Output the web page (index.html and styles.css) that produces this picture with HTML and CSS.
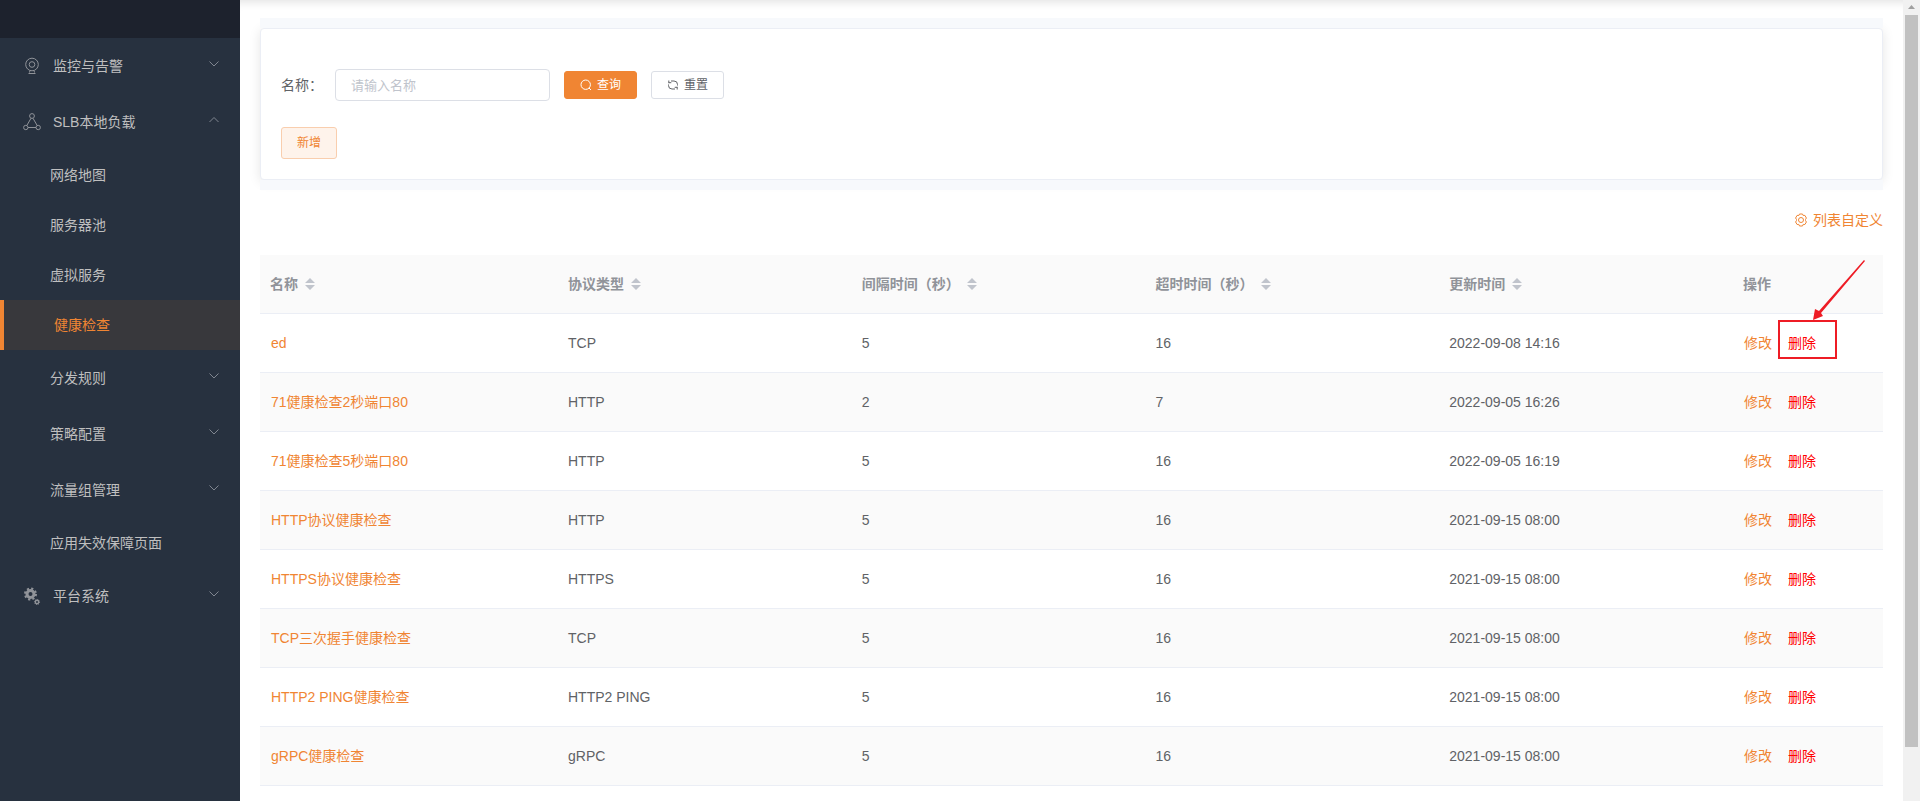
FILE: index.html
```
<!DOCTYPE html>
<html lang="zh-CN">
<head>
    <meta charset="utf-8">
    <meta name="viewport" content="width=device-width, initial-scale=1">
    <title>健康检查</title>
    <link rel="stylesheet" href="styles.css">
</head>
<body>
    <!-- shared icons -->
    <svg class="sprite" aria-hidden="true">
        <symbol id="down" viewBox="0 0 12 12"><path d="M1.500 3.500 6 8l4.500-4.500"/></symbol>
        <symbol id="up" viewBox="0 0 12 12"><path d="M1.500 8 6 3.500 10.500 8"/></symbol>
        <symbol id="sort" viewBox="0 0 10 12"><path d="M5 0l5 5H0zM5 12l5-5H0z"/></symbol>
    </svg>

    <aside class="sidebar">
        <div class="logo"></div>
        <nav>
            <a href="#" class="item">
                <svg class="icon" viewBox="0 0 18 18"><circle cx="9" cy="7.500" r="6.300"/><circle cx="9" cy="7.500" r="2.800"/><path d="M7 13.500l-.5 2M11 13.500l.5 2M5.500 16.500h7"/></svg>
                <span>监控与告警</span>
                <svg class="arrow"><use href="#down"/></svg>
            </a>
            <a href="#" class="item">
                <svg class="icon" viewBox="0 0 18 18"><circle cx="9" cy="3" r="2.400"/><circle cx="2.800" cy="14.500" r="2.200"/><circle cx="15.200" cy="14.500" r="2.200"/><path d="M8 5.300 3.800 12.500M10 5.300l4.200 7.200M5 14.500h8"/></svg>
                <span>SLB本地负载</span>
                <svg class="arrow"><use href="#up"/></svg>
            </a>
            <div class="submenu">
                <a href="#" class="sub">网络地图</a>
                <a href="#" class="sub">服务器池</a>
                <a href="#" class="sub">虚拟服务</a>
                <a href="#" class="sub active">健康检查</a>
                <a href="#" class="item"><span>分发规则</span><svg class="arrow"><use href="#down"/></svg></a>
                <a href="#" class="item"><span>策略配置</span><svg class="arrow"><use href="#down"/></svg></a>
                <a href="#" class="item"><span>流量组管理</span><svg class="arrow"><use href="#down"/></svg></a>
                <a href="#" class="sub">应用失效保障页面</a>
            </div>
            <a href="#" class="item">
                <svg class="icon" viewBox="0 0 18 18"><circle cx="7.500" cy="7" r="3.500" stroke-width="3"/><circle cx="7.500" cy="7" r="5.500" stroke-width="2" stroke-dasharray="2.160 2.160"/><circle cx="14" cy="15" r="1.700" stroke-width="1.400"/><circle cx="14" cy="15" r="2.600" stroke-dasharray="1 1.040"/></svg>
                <span>平台系统</span>
                <svg class="arrow"><use href="#down"/></svg>
            </a>
        </nav>
    </aside>

    <main>
        <div class="search">
            <form class="card">
                <div class="form-row">
                    <label for="name">名称：</label>
                    <input type="text" id="name" placeholder="请输入名称">
                    <button type="button" class="btn primary">
                        <svg viewBox="0 0 12 12"><circle cx="5.700" cy="5.700" r="4.700"/><path d="M9 9l2 2"/></svg>查询
                    </button>
                    <button type="reset" class="btn">
                        <svg viewBox="0 0 12 12"><path d="M1.800 4.200V1.500M1.800 3.700h2.500M4 2h3a3.500 3.500 0 0 1 3.500 3.500v1M10.200 7.800v2.700M10.200 8.300H7.700M8 10H5a3.500 3.500 0 0 1-3.500-3.500v-1"/></svg>重置
                    </button>
                </div>
                <button type="button" class="btn add">新增</button>
            </form>
        </div>

        <div class="toolbar">
            <a href="#">
                <svg viewBox="0 0 14 14"><path d="M5.500 1h3l.7 1.500 1.700-.1 1.500 2.600-.9 1.500v1l.9 1.500-1.500 2.500-1.700-.1-.7 1.600h-3l-.7-1.600-1.700.1L1.600 9l.9-1.500v-1L1.600 5l1.500-2.600 1.700.1z"/><circle cx="7" cy="7" r="2.500"/></svg>列表自定义
            </a>
        </div>

        <table>
            <colgroup>
                <col>
                <col class="col">
                <col class="col">
                <col class="col">
                <col class="col">
                <col class="col-action">
            </colgroup>
            <thead>
                <tr>
                    <th>名称<svg class="sort"><use href="#sort"/></svg></th>
                    <th>协议类型<svg class="sort"><use href="#sort"/></svg></th>
                    <th>间隔时间（秒）<svg class="sort"><use href="#sort"/></svg></th>
                    <th>超时时间（秒）<svg class="sort"><use href="#sort"/></svg></th>
                    <th>更新时间<svg class="sort"><use href="#sort"/></svg></th>
                    <th>操作</th>
                </tr>
            </thead>
            <tbody>
                <tr>
                    <td><a href="#">ed</a></td><td>TCP</td><td>5</td><td>16</td><td>2022-09-08 14:16</td>
                    <td>
                        <a href="#">修改</a>
                        <span class="marked">
                            <a href="#" class="del">删除</a>
                            <svg class="pointer" viewBox="0 0 52 61"><path d="M51 0 6 51 2 49 0 60 10 56 8 53 52 1z"/></svg>
                        </span>
                    </td>
                </tr>
                <tr>
                    <td><a href="#">71健康检查2秒端口80</a></td><td>HTTP</td><td>2</td><td>7</td><td>2022-09-05 16:26</td>
                    <td><a href="#">修改</a> <a href="#" class="del">删除</a></td>
                </tr>
                <tr>
                    <td><a href="#">71健康检查5秒端口80</a></td><td>HTTP</td><td>5</td><td>16</td><td>2022-09-05 16:19</td>
                    <td><a href="#">修改</a> <a href="#" class="del">删除</a></td>
                </tr>
                <tr>
                    <td><a href="#">HTTP协议健康检查</a></td><td>HTTP</td><td>5</td><td>16</td><td>2021-09-15 08:00</td>
                    <td><a href="#">修改</a> <a href="#" class="del">删除</a></td>
                </tr>
                <tr>
                    <td><a href="#">HTTPS协议健康检查</a></td><td>HTTPS</td><td>5</td><td>16</td><td>2021-09-15 08:00</td>
                    <td><a href="#">修改</a> <a href="#" class="del">删除</a></td>
                </tr>
                <tr>
                    <td><a href="#">TCP三次握手健康检查</a></td><td>TCP</td><td>5</td><td>16</td><td>2021-09-15 08:00</td>
                    <td><a href="#">修改</a> <a href="#" class="del">删除</a></td>
                </tr>
                <tr>
                    <td><a href="#">HTTP2 PING健康检查</a></td><td>HTTP2 PING</td><td>5</td><td>16</td><td>2021-09-15 08:00</td>
                    <td><a href="#">修改</a> <a href="#" class="del">删除</a></td>
                </tr>
                <tr>
                    <td><a href="#">gRPC健康检查</a></td><td>gRPC</td><td>5</td><td>16</td><td>2021-09-15 08:00</td>
                    <td><a href="#">修改</a> <a href="#" class="del">删除</a></td>
                </tr>
            </tbody>
        </table>
    </main>

    <div class="scrollbar">
        <svg viewBox="0 0 7 4"><path d="M0 4 3.500 0 7 4z"/></svg>
        <div class="thumb"></div>
    </div>
</body>
</html>
```
FILE: styles.css
```
* {
    box-sizing: border-box;
}
body {
    margin: 0;
    display: flex;
    min-height: 100vh;
    font-family: "Liberation Sans", "Noto Sans CJK SC", sans-serif;
    font-size: 14px;
    line-height: 20px;
    color: #606266;
    background-color: #fff;
}
a {
    color: #f08533;
    text-decoration: none;
}
svg {
    fill: none;
    stroke: currentColor;
}
.sprite {
    display: none;
}

/* Sidebar */
.sidebar {
    flex: none;
    width: 240px;
    background-color: #27313f;
}
.logo {
    height: 38px;
    background-color: #1d222d;
}
.item, .sub {
    display: flex;
    align-items: center;
    color: #bfbfbf;
}
.item {
    height: 56px;
    padding: 0 20px 0 23px;
}
.sub {
    height: 50px;
    padding-left: 50px;
}
.submenu .item {
    padding-left: 50px;
}
.sub.active {
    color: #f08533;
    background-color: #38383c;
    border-left: 4px solid #f08533;
}
.icon {
    width: 18px;
    height: 18px;
    margin-right: 12px;
    color: #909399;
}
.arrow {
    width: 12px;
    height: 12px;
    margin: 0 0 4px auto;
    color: #808690;
}

/* Content */
main {
    flex: 1;
    min-width: 0;
    padding: 18px 20px 0;
    box-shadow: inset 0 10px 10px -8px rgba(0, 0, 0, 0.12);
}
/* strips above and below the card, they cover its shadow */
.search::before, .search::after {
    content: "";
    display: block;
    position: relative;
    height: 10px;
    background-color: #f7f9fc;
}
.card {
    padding: 40px 20px 20px;
    background-color: #fff;
    border: 1px solid #ebeef5;
    border-radius: 4px;
    box-shadow: 0 2px 12px rgba(0, 0, 0, 0.1);
}
.form-row {
    display: flex;
    align-items: center;
    margin-bottom: 26px;
}
.form-row label {
    width: 54px;
}
.form-row input {
    width: 215px;
    height: 32px;
    padding: 0 15px;
    font: inherit;
    font-size: 13px;
    border: 1px solid #dcdfe6;
    border-radius: 4px;
}
.form-row input::placeholder {
    color: #c0c4cc;
}
.btn {
    height: 28px;
    width: 73px;
    padding: 0;
    margin-left: 14px;
    display: flex;
    align-items: center;
    justify-content: center;
    gap: 5px;
    font: inherit;
    font-size: 12px;
    color: #606266;
    background-color: #fff;
    border: 1px solid #dcdfe6;
    border-radius: 3px;
}
.btn svg {
    width: 12px;
    height: 12px;
}
.btn.primary {
    color: #fff;
    background-color: #f08533;
    border-color: #f08533;
}
.btn.add {
    width: 56px;
    height: 32px;
    margin: 0;
    color: #f08533;
    background-color: #fef3eb;
    border-color: #f9ceae;
}
.toolbar {
    display: flex;
    justify-content: flex-end;
    padding: 20px 0 25px;
}
.toolbar a {
    display: flex;
    align-items: center;
    gap: 5px;
}
.toolbar svg {
    width: 14px;
    height: 14px;
}

/* Table */
table {
    width: 100%;
    table-layout: fixed;
    border-collapse: separate;
    border-spacing: 0;
}
.col {
    width: 18.1%;
}
.col-action {
    width: 150px;
}
th, td {
    height: 59px;
    padding: 0 10px;
    text-align: left;
    border-bottom: 1px solid #ebeef5;
}
th {
    color: #909399;
    background-color: #fafafa;
}
td a {
    margin-left: 1px;
}
tbody tr:nth-child(even) {
    background-color: #fafafa;
}
.sort {
    width: 10px;
    height: 12px;
    margin-left: 7px;
    vertical-align: -1px;
    fill: #c0c4cc;
    stroke: none;
}
td .del {
    margin-left: 12px;
    color: #f00;
}
/* red box and arrow over the first delete link */
.marked {
    position: relative;
}
.marked::before {
    content: "";
    position: absolute;
    left: 2px;
    top: -15px;
    width: 55px;
    height: 35px;
    border: 2px solid #ee1c25;
}
.pointer {
    position: absolute;
    left: 37px;
    bottom: 30px;
    width: 52px;
    height: 61px;
    fill: #ee1c25;
    stroke: none;
}

/* Scrollbar */
.scrollbar {
    flex: none;
    display: flex;
    flex-direction: column;
    align-items: center;
    width: 17px;
    height: 100vh;
    padding-top: 5px;
    background-color: #f1f1f1;
}
.scrollbar svg {
    width: 7px;
    height: 4px;
    margin-bottom: 6px;
    fill: #a0a0a0;
    stroke: none;
}
.thumb {
    width: 13px;
    height: 92%;
    background-color: #c1c1c1;
}
```
